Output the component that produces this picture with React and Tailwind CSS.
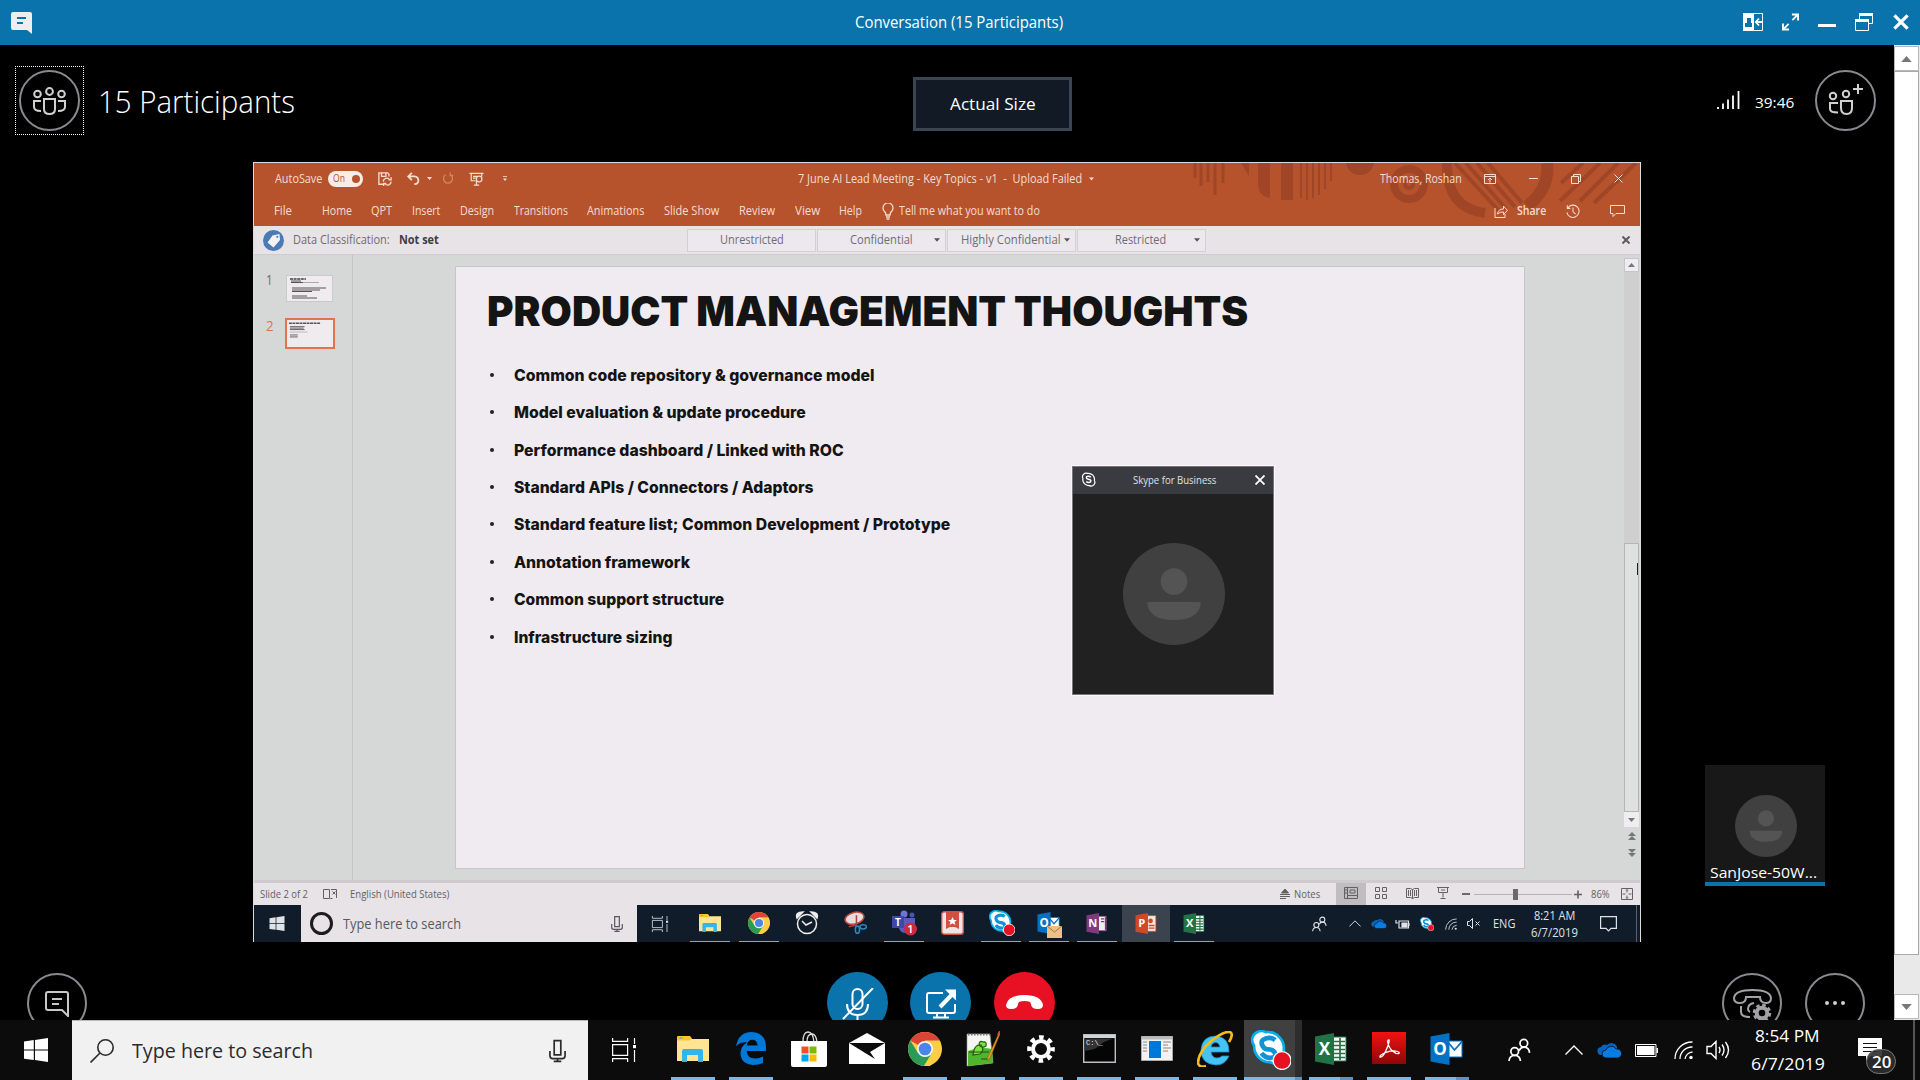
import { useLayoutEffect, useRef, useState } from "react";

/* Single-line label whose glyphs are condensed or widened to fill its slot. */
function Fit({ className = "", children }) {
  const outer = useRef(null);
  const inner = useRef(null);
  const [scale, setScale] = useState(1);
  useLayoutEffect(() => {
    const w = inner.current.offsetWidth;
    if (w) setScale(outer.current.clientWidth / w);
  }, []);
  return (
    <span ref={outer} className={"block shrink-0 whitespace-nowrap " + className}>
      <span ref={inner} className="inline-block origin-left" style={{ transform: `scaleX(${scale})` }}>
        {children}
      </span>
    </span>
  );
}

function Icon({ className = "", box = "0 0 16 16", sw = 1, children }) {
  return (
    <svg className={"block shrink-0 " + className} viewBox={box} fill="none" stroke="currentColor" strokeWidth={sw}>
      {children}
    </svg>
  );
}

const Caret = ({ className = "w-[7px] h-[4px]" }) => (
  <Icon className={className} box="0 0 7 4">
    <path d="M0 0h7L3.500 4z" fill="currentColor" stroke="none" />
  </Icon>
);

/* ---------- Title bar ---------- */
function TitleBar() {
  return (
    <div className="flex h-[45px] shrink-0 items-start bg-[#0a73ab] text-white">
      <Icon className="ml-[11px] mt-[12px] h-[22px] w-[21px]" box="0 0 21 22">
        <path d="M2 0h17a2 2 0 0 1 2 2v20l-5-4H2a2 2 0 0 1-2-2V2a2 2 0 0 1 2-2z" fill="#eee" stroke="none" />
        <path d="M6 6h9M6 11h6" stroke="#0a73ab" strokeWidth="2" />
      </Icon>
      <Fit className="ml-[823px] mt-[10px] w-[208px] text-[16px] leading-6">Conversation (15 Participants)</Fit>
      <Icon className="ml-[680px] mt-[13px] h-[18px] w-[20px]" box="0 0 20 18">
        <path d="M0.5 0.5h19v17h-19z" />
        <path d="M0 0h11v18H0z" fill="currentColor" stroke="none" />
        <path d="M4 5h4v5H4zM2 10h7v4H2z" fill="#0a73ab" stroke="none" />
        <path d="M19 9h-5.500M16 5.500L12.800 9l3.200 3.500" strokeWidth="1.800" />
      </Icon>
      <Icon className="ml-[19px] mt-[13px] h-[18px] w-[17px]" box="0 0 18 18" sw={2}>
        <path d="M10.500 1H17v6.500M17 1l-6 6M7.500 17H1v-6.500M1 17l6-6" />
      </Icon>
      <div className="ml-[19px] mt-[24px] h-[3px] w-[18px] bg-white" />
      <Icon className="ml-[19px] mt-[13px] h-[18px] w-[18px]" box="0 0 18 18">
        <path d="M4.500 6V.5h13v10H14" />
        <path d="M4 1.500h14" strokeWidth="3" />
        <path d="M.5 6.500h13v11H.5z" />
        <path d="M0 7.500h14" strokeWidth="3" />
      </Icon>
      <Icon className="ml-[20px] mt-[14px] h-[16px] w-[16px]" box="0 0 17 16" sw={3.400}>
        <path d="M1.500 1l14 14M15.500 1l-14 14" />
      </Icon>
    </div>
  );
}

/* ---------- Call header ---------- */
function CallHeader() {
  return (
    <div className="flex h-[117px] shrink-0 items-start text-white">
      <div className="ml-[15px] mt-[21px] flex h-[69px] w-[69px] items-center justify-center border border-dotted border-white">
        <div className="flex h-[61px] w-[61px] items-center justify-center rounded-full border-2 border-[#8b8990] text-[#d0d0d0]">
          <Icon className="mt-[1px] h-[28px] w-[33px]" box="0 0 33 28" sw={2}>
            <circle cx="16.500" cy="4.500" r="3.400" />
            <circle cx="4.500" cy="7" r="3.300" />
            <circle cx="28.500" cy="7" r="3.300" />
            <path d="M11 12h11v10q0 5-5.500 5T11 22z" />
            <path d="M8 14H1v6q0 4 7 4M25 14h7v6q0 4-7 4" />
          </Icon>
        </div>
      </div>
      <Fit className="ml-[14px] mt-[34px] w-[197px] text-[32px] font-light leading-[44px]">15 Participants</Fit>
      <div className="ml-[618px] mt-[32px] flex h-[54px] w-[159px] items-center justify-center border-[3px] border-[#3a4651] bg-[#121b25]">
        <Fit className="mb-[1px] w-[86px] text-[17px] leading-6">Actual Size</Fit>
      </div>
      <Icon className="ml-[645px] mt-[46px] h-[18px] w-[23px]" box="0 0 23 18" sw={1.800}>
        <path d="M1 16v2M6 12.500V18M11 8.500V18M16 4.500V18M21.500 0v18" />
      </Icon>
      <Fit className="ml-[15px] mt-[46px] w-[39px] text-[15px] leading-[22px]">39:46</Fit>
      <div className="ml-[21px] mt-[25px] flex h-[61px] w-[61px] items-center justify-center rounded-full border-2 border-[#8b8990] text-[#d0d0d0]">
        <Icon className="mb-[3px] ml-[1px] h-[31px] w-[36px]" box="0 0 36 31" sw={2}>
          <circle cx="5" cy="12" r="3.200" />
          <circle cx="18" cy="10" r="3.200" />
          <path d="M13 17h11v7q0 6-5.500 6T13 24z" />
          <path d="M10 19H2v6q0 3.500 8 3.500" />
          <path d="M30 0v10M25 5h10" />
        </Icon>
      </div>
    </div>
  );
}

/* ---------- Shared presentation window ---------- */
const TABS = [
  ["File", "ml-[20px] w-[18px]"],
  ["Home", "ml-[30px] w-[30px]"],
  ["QPT", "ml-[19px] w-[21px]"],
  ["Insert", "ml-[20px] w-[28px]"],
  ["Design", "ml-[20px] w-[34px]"],
  ["Transitions", "ml-[20px] w-[54px]"],
  ["Animations", "ml-[19px] w-[57px]"],
  ["Slide Show", "ml-[20px] w-[55px]"],
  ["Review", "ml-[20px] w-[36px]"],
  ["View", "ml-[20px] w-[25px]"],
  ["Help", "ml-[19px] w-[23px]"],
];

function Ribbon() {
  return (
    <div className="relative h-[63px] shrink-0 overflow-hidden bg-[#b6532d] text-[12px] font-medium text-[#f8dcd0]">
      <svg className="absolute right-0 top-0 h-[63px] w-[460px]" viewBox="1180 163 460 63" fill="none" stroke="#a04626">
        <path d="M1195 163v15M1201 163v23M1208 163v19M1215 163v32M1223 163v20" strokeWidth="3" />
        <path d="M1241 163h8v13z" fill="#a04626" stroke="none" />
        <path d="M1258 163h12v35q-12-2-12-14zM1281 163h12v37h-12z" fill="#a04626" stroke="none" />
        <path d="M1301 163v35M1307 163v37M1313 163v35M1319 163v32M1325 163v26M1331 163v18" strokeWidth="2" />
        <path d="M1346 163h28q-3 12-14 12t-14-12z" fill="#a04626" stroke="none" />
        <circle cx="1409" cy="184" r="15" strokeWidth="8" />
        <circle cx="1409" cy="184" r="4" strokeWidth="4" />
        <path d="M1447 163q-1 45 38 50" strokeWidth="10" />
        <path d="M1455 163l44 48M1466 163l40 46M1477 163l38 44M1488 163l34 40" strokeWidth="4" />
        <path d="M1547 163q3 26-20 43" strokeWidth="12" />
        <path d="M1583 163l-22 20M1600 163l-40 38M1618 163l-38 38M1636 163l-42 40" strokeWidth="4" />
      </svg>
      <div className="relative flex h-[31px] items-center">
        <Fit className="ml-[21px] w-[47px]">AutoSave</Fit>
        <div className="ml-[6px] flex h-[16px] w-[35px] items-center justify-between rounded-full bg-[#f8ebe8] pl-[5px] pr-[3px] text-[10px] text-[#b6532d]">
          <Fit className="w-[12px]">On</Fit>
          <span className="h-[8px] w-[8px] rounded-full bg-[#b6532d]" />
        </div>
        <Icon className="ml-[15px] h-[14px] w-[14px]" sw={1.500}>
          <path d="M6 14H1V1h10l1.500 1.500V5M4 1v4h5V1M6 11a4 4 0 0 1 7-2.500M15 6v3h-3M15 11a4 4 0 0 1-7 2.500M6.500 16v-3h3" />
        </Icon>
        <Icon className="ml-[15px] h-[13px] w-[13px]" sw={2.200}>
          <path d="M6 1L1.500 5.500 6 10M2 5.500h7q5 .5 5 5T9 15" />
        </Icon>
        <Caret className="ml-[7px] h-[3px] w-[5px]" />
        <Icon className="ml-[10px] h-[13px] w-[12px] text-[#cf8466]" sw={1.800}>
          <path d="M5 3a6 6 0 1 0 6 0M11 0v4h4" />
        </Icon>
        <Icon className="ml-[15px] h-[14px] w-[15px]" sw={1.400}>
          <path d="M0 1.500h16M2 2v8h5M14 2v3M4 5h5M4 7h3M8 10v5M5 15h6" />
          <circle cx="11" cy="8" r="3.200" />
        </Icon>
        <Icon className="ml-[19px] h-[5px] w-[4px]" box="0 0 5 6">
          <path d="M0 .5h5" />
          <path d="M0 3h5L2.500 6z" fill="currentColor" stroke="none" />
        </Icon>
        <Fit className="ml-[291px] w-[284px]">7 June AI Lead Meeting - Key Topics - v1&nbsp; -&nbsp; Upload Failed</Fit>
        <Caret className="ml-[7px] h-[4px] w-[5px]" />
        <Fit className="ml-[286px] w-[82px]">Thomas, Roshan</Fit>
        <Icon className="ml-[22px] h-[10px] w-[12px]" box="0 0 12 10">
          <path d="M.5.5h11v9H.5zM.5 2.500h11M6 8.500V4M4 6l2-2 2 2" />
        </Icon>
        <div className="ml-[33px] h-[1px] w-[9px] bg-[#f8dcd0]" />
        <Icon className="ml-[33px] h-[10px] w-[10px]" box="0 0 10 10">
          <path d="M.5 2.500h7v7h-7zM2.500 2V.5h7v7H8" />
        </Icon>
        <Icon className="ml-[33px] h-[9px] w-[9px]" box="0 0 9 9">
          <path d="M.5.5l8 8M8.500.5l-8 8" />
        </Icon>
      </div>
      <div className="relative flex h-[34px] items-center">
        {TABS.map(([label, cls]) => (
          <Fit key={label} className={cls}>{label}</Fit>
        ))}
        <Icon className="ml-[20px] h-[17px] w-[12px]" box="0 0 12 17" sw={1.300}>
          <path d="M4 12q0-2-1.500-3.500a5 5 0 1 1 7 0Q8 10 8 12zM4 14h4M4.500 16h3" />
        </Icon>
        <Fit className="ml-[5px] w-[141px]">Tell me what you want to do</Fit>
        <Icon className="ml-[454px] h-[13px] w-[14px]" box="0 0 14 13">
          <path d="M1 3v9.500h10V9M3.500 9q.5-5 6-5V1l4 4.500-4 4V7Q6 6.500 3.500 9z" />
        </Icon>
        <Fit className="ml-[9px] w-[29px] font-semibold">Share</Fit>
        <Icon className="ml-[20px] h-[14px] w-[14px]" sw={1.200}>
          <path d="M2 4.500a7 7 0 1 1-1 5M1.500 1.500v3.500H5M8 4v5l3 2.500" />
        </Icon>
        <Icon className="ml-[30px] h-[12px] w-[15px]" box="0 0 15 12">
          <path d="M.5.5h14v8H6l-3 3v-3H.5z" />
        </Icon>
      </div>
    </div>
  );
}

const CLASSES = [
  ["Unrestricted", "w-[64px] ml-[32px]", null],
  ["Confidential", "w-[63px] ml-[32px]", "ml-[21px]"],
  ["Highly Confidential", "w-[100px] ml-[13px]", "ml-[3px]"],
  ["Restricted", "w-[51px] ml-[37px]", "ml-[28px]"],
];

function DataBar() {
  return (
    <div className="flex h-[29px] shrink-0 items-center border-b border-[#cfccd0] bg-[#e7e3e7] text-[12px] font-medium text-[#6f6c72]">
      <Icon className="ml-[9px] h-[21px] w-[21px]" box="0 0 21 21">
        <circle cx="10.500" cy="10.500" r="10.500" fill="#4b7ab4" stroke="none" />
        <path d="M9.500 5.500l7-1.500.5 6-6.500 7.500-6-5z" fill="#f4f2f7" stroke="none" />
        <circle cx="14.300" cy="6.800" r="1.100" fill="#4b7ab4" stroke="none" />
      </Icon>
      <Fit className="ml-[9px] w-[97px]">Data Classification:</Fit>
      <Fit className="ml-[9px] w-[40px] font-bold text-[#3f3d40]">Not set</Fit>
      <div className="ml-[248px] flex gap-[1px]">
        {CLASSES.map(([label, cls, caret]) => (
          <div key={label} className="flex h-[23px] w-[129px] items-center border border-[#d3cfd4] bg-[#ece8ed]">
            <Fit className={cls}>{label}</Fit>
            {caret && <Caret className={"h-[4px] w-[6px] text-[#555] " + caret} />}
          </div>
        ))}
      </div>
      <Icon className="ml-[416px] h-[8px] w-[8px] text-[#5c5c5c]" box="0 0 8 8" sw={2}>
        <path d="M.5.5l7 7M7.500.5l-7 7" />
      </Icon>
    </div>
  );
}

const BULLETS = [
  ["Common code repository & governance model", "w-[360px]"],
  ["Model evaluation & update procedure", "w-[292px]"],
  ["Performance dashboard / Linked with ROC", "w-[330px]"],
  ["Standard APIs / Connectors / Adaptors", "w-[300px]"],
  ["Standard feature list; Common Development / Prototype", "w-[436px]"],
  ["Annotation framework", "w-[176px]"],
  ["Common support structure", "w-[210px]"],
  ["Infrastructure sizing", "w-[158px]"],
];

function Avatar({ className }) {
  return (
    <svg className={"block shrink-0 " + className} viewBox="0 0 102 102">
      <circle cx="51" cy="51" r="51" fill="#404040" />
      <circle cx="51" cy="38.500" r="13.300" fill="#545454" />
      <path d="M24.500 59h53v3q-3 15-26.500 15T24.500 62z" fill="#545454" />
    </svg>
  );
}

function SkypePopup() {
  return (
    <div className="absolute left-[818px] top-[211px] h-[229px] w-[202px] border border-[#77777a] bg-[#212121] outline outline-[#fbf8fb]">
      <div className="flex h-[27px] items-center bg-[#3a3b41] pb-[2px] text-white">
        <Icon className="ml-[8px] h-[15px] w-[15px]" sw={1.300}>
          <path d="M2 7A4 4 0 0 1 7 1.500 6.500 6.500 0 0 1 14.300 9 4 4 0 0 1 9 14.500 6.500 6.500 0 0 1 2 7z" />
          <path d="M10.500 5.500Q8 3.800 6 5q-1 2 2 2.800 3.500.7 2.200 2.700-2 1.500-4.700-.3" strokeWidth="1.500" />
        </Icon>
        <Fit className="ml-[37px] w-[83px] text-[11.500px] text-[#e0e0e2]">Skype for Business</Fit>
        <Icon className="ml-[39px] h-[10px] w-[10px]" box="0 0 10 10" sw={1.800}>
          <path d="M.5.5l9 9M9.500.5l-9 9" />
        </Icon>
      </div>
      <Avatar className="ml-[50px] mt-[49px] h-[102px] w-[102px]" />
    </div>
  );
}

function Workspace() {
  return (
    <div className="relative flex h-[625px] shrink-0 bg-[#d6d8d7]">
      <div className="w-[99px] shrink-0 border-r border-[#c4c6c5] pl-[12px] pt-[19px] text-[15px] font-medium text-[#6c6c6c]">
        <div className="flex">
          <Fit className="mt-[-3px] w-[7px] leading-[16px]">1</Fit>
          <div className="ml-[13px] mt-[1px] h-[27px] w-[47px] border border-[#cacaca] bg-[#efebef]">
            <svg className="h-[25px] w-[45px]" viewBox="0 0 45 25" stroke="#444" fill="none">
              <path d="M3 3h16" strokeWidth="1.500" strokeDasharray="3 .6" />
              <path d="M4 5h10M4 6.500h12M5 12h34M5 14h28M5 15.500h20M5 20h15M5 22h25" strokeWidth=".9" />
              <path d="M16 6.500h16" stroke="#aaa" />
            </svg>
          </div>
        </div>
        <div className="mt-[16px] flex">
          <Fit className="mt-[-1px] w-[8px] leading-[16px] text-[#e0705c]">2</Fit>
          <div className="ml-[11px] h-[31px] w-[50px] border-2 border-[#e4714f] bg-[#efebef]">
            <svg className="h-[27px] w-[46px]" viewBox="0 0 47 27" stroke="#555" fill="none">
              <path d="M2 3h32" strokeWidth="1.500" strokeDasharray="3 .6" />
              <path d="M3 6.500h15M3 8h14M3 9.500h15M3 15h8M3 17h8" strokeWidth=".9" />
              <path d="M3 12h18" stroke="#bbb" />
            </svg>
          </div>
        </div>
      </div>
      <div className="ml-[102px] mt-[11px] h-[603px] w-[1070px] shrink-0 border border-[#c6c6c8] bg-[#f0ebf0] pl-[30px] text-[#141414]">
        <Fit className="mt-[18px] ml-[1px] w-[761px] font-[Inter] text-[41.500px] font-black leading-[52px]">PRODUCT MANAGEMENT THOUGHTS</Fit>
        <ul className="mt-[19px] font-[Inter] text-[16px] font-extrabold">
          {BULLETS.map(([text, w]) => (
            <li key={text} className="flex h-[37.450px] items-center">
              <span className="ml-[4px] mr-[20px] h-[4px] w-[4px] rounded-full bg-[#222]" />
              <Fit className={w}>{text}</Fit>
            </li>
          ))}
        </ul>
      </div>
      <div className="ml-[99px] w-[16px] shrink-0 text-[#777]">
        <div className="mt-[3px] flex h-[14px] w-[15px] items-center justify-center border border-[#c6c6c6] bg-[#efedef]">
          <Caret className="h-[4px] w-[7px] rotate-180" />
        </div>
        <div className="h-[271px] w-[15px] bg-[#cfcfcf]" />
        <div className="h-[269px] w-[15px] border border-[#b5b5b5] bg-[#dfe1e0]">
          <div className="ml-auto mt-[19px] h-[12px] w-[1px] bg-[#222]" />
        </div>
        <div className="flex h-[15px] w-[15px] items-center justify-center bg-[#efedef]">
          <Caret className="h-[4px] w-[7px]" />
        </div>
        <Icon className="ml-[4px] mt-[5px] h-[9px] w-[8px]" box="0 0 8 9">
          <path d="M4 0l4 4H0zM4 4l4 4H0z" fill="currentColor" stroke="none" />
        </Icon>
        <Icon className="ml-[4px] mt-[8px] h-[9px] w-[8px]" box="0 0 8 9">
          <path d="M0 0h8L4 4zM0 4h8L4 8z" fill="currentColor" stroke="none" />
        </Icon>
      </div>
      <SkypePopup />
    </div>
  );
}

function StatusBar() {
  return (
    <div className="flex h-[25px] shrink-0 items-center border-t-[3px] border-[#cdcbce] bg-[#e7e3e7] text-[11px] font-medium text-[#626264]">
      <Fit className="ml-[6px] w-[48px]">Slide 2 of 2</Fit>
      <Icon className="mb-[2px] ml-[15px] h-[11px] w-[14px]" box="0 0 14 11">
        <path d="M6.500 1.500v9H.5v-9zM6.500 9.500l1 1h2M8 1.500h5.500V10M9.500 3.500l3 3M12.500 3.500l-3 3" />
      </Icon>
      <Fit className="ml-[13px] w-[99px]">English (United States)</Fit>
      <Icon className="ml-[831px] h-[10px] w-[10px]" box="0 0 10 10">
        <path d="M5 0l3.500 4h-7zM0 5.500h10M0 7.500h10M0 9.500h6" fill="currentColor" />
      </Icon>
      <Fit className="ml-[4px] w-[26px]">Notes</Fit>
      <div className="ml-[16px] flex h-full w-[30px] items-center justify-center bg-[#bfbdbf]">
        <Icon className="mb-[2px] h-[12px] w-[14px]" box="0 0 14 12">
          <path d="M.5.5h13v11H.5zM3.500.5v11M6 3h5v3H6zM3.500 8.500h10M1 3h2M1 6h2" />
        </Icon>
      </div>
      <Icon className="mb-[2px] ml-[9px] h-[12px] w-[12px]" box="0 0 12 12">
        <path d="M.5.5h4v4h-4zM7.500.5h4v4h-4zM.5 7.500h4v4h-4zM7.500 7.500h4v4h-4z" />
      </Icon>
      <Icon className="mb-[2px] ml-[19px] h-[11px] w-[13px]" box="0 0 13 11">
        <path d="M6.500 1.500v9M.5.5h4l2 1 2-1h4v9h-4l-2 1-2-1h-4zM2.500 2v6M4.500 2v6M8.500 2v6M10.500 2v6" />
      </Icon>
      <Icon className="mb-[2px] ml-[18px] h-[12px] w-[12px]" box="0 0 12 12">
        <path d="M0 .5h12M1.500.5v5h9v-5M6 5.500v5M3.500 11.500h5M4 3h4" />
      </Icon>
      <div className="ml-[13px] h-[2px] w-[8px] bg-[#6a6a6c]" />
      <div className="ml-[4px] h-[1px] w-[39px] bg-[#b5b3b5]" />
      <div className="h-[11px] w-[5px] bg-[#6a6a6c]" />
      <div className="h-[1px] w-[54px] bg-[#b5b3b5]" />
      <Icon className="ml-[2px] h-[9px] w-[8px]" box="0 0 8 8" sw={1.600}>
        <path d="M4 0v8M0 4h8" />
      </Icon>
      <Fit className="ml-[9px] w-[19px]">86%</Fit>
      <Icon className="mb-[1px] ml-[11px] h-[12px] w-[12px]" box="0 0 12 12">
        <path d="M.5.5h11v11H.5zM6 1.500v3M6 7.500v3M1.500 6h3M7.500 6h3M5 2.500l1-1 1 1M5 9.500l1 1 1-1" />
      </Icon>
    </div>
  );
}

/* ---------- Application icons shared by both taskbars ---------- */
const Windows = ({ className }) => (
  <svg className={"block shrink-0 " + className} viewBox="0 0 24 24" fill="currentColor">
    <path d="M0 3.400L9.800 2v9.500H0zM11 1.900L24 0v11.500H11zM0 12.600h9.800V22L0 20.700zM11 12.600h13V24l-13-1.900z" />
  </svg>
);
const Mic = ({ className }) => (
  <Icon className={className} box="0 0 18 24" sw={1.800}>
    <path d="M5.500 1h7v15h-7zM1 12v5q0 3 3 3h10q3 0 3-3v-5M9 20v3M5 23h8" />
  </Icon>
);
const TaskView = ({ className }) => (
  <Icon className={className} box="0 0 24 24" sw={1.200}>
    <path d="M.6 0v3.400h15V0M.6 6.600h15v10.800H.6zM.6 24v-3.400h15V24M22.500 0v6M22.500 12v12" />
    <path d="M21 7h3.200v3.200H21z" fill="currentColor" stroke="none" />
  </Icon>
);
const Explorer = ({ className }) => (
  <svg className={"block " + className} viewBox="0 0 32 26">
    <path d="M0 1h13l1.500 2H32v22H0z" fill="#ffe592" />
    <path d="M0 1q0-1 1-1h12l2 2.500-2 2H0z" fill="#fbc52d" />
    <path d="M2.500 2h3" stroke="#4aa8e8" strokeWidth="1.200" />
    <path d="M5 26V15q0-2 2-2h17q2 0 2 2v11h-5v-7H10v7z" fill="#35b4ea" />
  </svg>
);
const Chrome = ({ className }) => (
  <svg className={"block " + className} viewBox="0 0 34 34">
    <circle cx="17" cy="17" r="17" fill="#fccd45" />
    <path d="M17 17L2.300 8.500A17 17 0 0 1 31.700 8.500H17z" fill="#dc4437" />
    <path d="M2.300 8.500A17 17 0 0 0 16 34l8-13-7-4-7 4z" fill="#2b9a55" />
    <path d="M17 9h15q4 13-5 21t-11 4l8-13z" fill="#fccd45" />
    <circle cx="17" cy="17" r="8" fill="#f5f5f5" />
    <circle cx="17" cy="17" r="6.300" fill="#4a86e8" />
  </svg>
);
const SkypeApp = ({ className }) => (
  <svg className={"block " + className} viewBox="0 0 38 38">
    <path d="M1 9A9 9 0 0 1 14 2 15.500 15.500 0 0 1 31 20 9 9 0 0 1 18 30.500 15 15 0 0 1 3 15 9 9 0 0 1 1 9z" fill="#fff" stroke="#00aff0" strokeWidth="2.500" />
    <path d="M23 9.500Q19 6.500 14 8t-3.500 6 6.500 4.500 6 4-4.500 4T10 22" fill="none" stroke="#1093d6" strokeWidth="4.500" />
    <circle cx="29.500" cy="29" r="8.500" fill="#e81123" stroke="#fff" strokeWidth="1.200" />
  </svg>
);
const OfficeDoor = ({ className, letter, color, children }) => (
  <svg className={"block " + className} viewBox="0 0 32 32">
    {children}
    <path d="M0 3.500L19 0v32L0 28.500z" fill={color} />
    <text x="9.500" y="22" textAnchor="middle" fontFamily="Open Sans, sans-serif" fontWeight="700" fontSize="17" fill="#fff">{letter}</text>
  </svg>
);
const Excel = ({ className }) => (
  <OfficeDoor className={className} letter="X" color="#217346">
    <path d="M17 4h14v24H17z" fill="#fff" stroke="#217346" />
    <path d="M17 8.500h13M17 12.500h13M17 16.500h13M17 20.500h13M17 24.500h13M25 5v22" stroke="#217346" strokeWidth="1.700" />
  </OfficeDoor>
);
const Outlook = ({ className }) => (
  <OfficeDoor className={className} letter="O" color="#0072c6">
    <path d="M18 8h13.500v16H18z" fill="#fff" stroke="#0072c6" />
    <path d="M18 10l6 7 7.500-8.500" fill="none" stroke="#0072c6" strokeWidth="1.800" />
  </OfficeDoor>
);
const People = ({ className }) => (
  <Icon className={className} box="0 0 24 24" sw={1.800}>
    <circle cx="16.500" cy="5" r="4" />
    <circle cx="7" cy="13.500" r="4" />
    <path d="M1 23.500q.5-6 6-6t6 6M11.500 12.500q2-3.500 5-3.500 5.500 0 6 6" />
  </Icon>
);
const Chevron = ({ className }) => (
  <Icon className={className} box="0 0 18 10" sw={1.400}>
    <path d="M.5 9.500L9 1l8.500 8.500" />
  </Icon>
);
const Cloud = ({ className }) => (
  <svg className={"block shrink-0 " + className} viewBox="0 0 25 16">
    <path d="M5 13a4 4 0 0 1-1-8 5 5 0 0 1 6-2 6 6 0 0 1 10 2v8z" fill="#0a63bd" />
    <path d="M9 16a4 4 0 0 1 0-8 5.500 5.500 0 0 1 10-1 4.500 4.500 0 0 1 2 9z" fill="#0a7be0" stroke="#0c0c0c" strokeWidth=".8" />
  </svg>
);
const Wifi = ({ className }) => (
  <Icon className={className} box="0 0 19 18" sw={1.300}>
    <path d="M1 18A17 17 0 0 1 18.500 1M6 18A12 12 0 0 1 18.500 6M11 18a8 8 0 0 1 7.500-7" />
    <circle cx="17" cy="16.500" r="1.700" fill="currentColor" stroke="none" />
  </Icon>
);

/* ---------- Inner taskbar ---------- */
const INNER_APPS = [
  [<Explorer className="h-[18px] w-[22px]" />, "bg-[#6cb0e2]"],
  [<Chrome className="h-[22px] w-[22px]" />, "bg-[#6cb0e2]"],
  [
    <Icon className="h-[24px] w-[24px] text-[#eee]" box="0 0 24 24" sw={1.500}>
      <circle cx="12" cy="13" r="9.500" />
      <path d="M7 10l4 4 6-3" />
      <path d="M2 7Q0 1 8 1zM22 7q2-6-6-6z" fill="currentColor" />
    </Icon>,
    "",
  ],
  [
    <Icon className="h-[24px] w-[23px]" box="0 0 24 24" sw={1.600}>
      <ellipse cx="11" cy="7" rx="10" ry="6" fill="#e8dddd" stroke="#c04a40" transform="rotate(-15 11 7)" />
      <path d="M13 4v10M13 14l-8 2" stroke="#b04040" />
      <ellipse cx="14" cy="19" rx="2.200" ry="3.800" stroke="#2a8ac0" />
      <ellipse cx="20" cy="16" rx="3.400" ry="2.200" stroke="#2a8ac0" />
    </Icon>,
    "",
  ],
  [
    <svg className="h-[26px] w-[26px]" viewBox="0 0 26 26">
      <circle cx="13" cy="4" r="3.500" fill="#6d76d8" />
      <circle cx="21" cy="5" r="2.500" fill="#4a54b4" />
      <path d="M8 8h16v9q-3 6-9 6t-7-5z" fill="#555ec0" />
      <path d="M1 6h12v12H1z" fill="#3f48a8" />
      <text x="7" y="16" textAnchor="middle" fontFamily="Open Sans, sans-serif" fontWeight="700" fontSize="10" fill="#fff">T</text>
      <circle cx="19.500" cy="19" r="6.500" fill="#d0283c" />
      <text x="19.500" y="23" textAnchor="middle" fontFamily="Open Sans, sans-serif" fontWeight="600" fontSize="11" fill="#fff">1</text>
    </svg>,
    "bg-[#6cb0e2]",
  ],
  [
    <svg className="h-[24px] w-[23px]" viewBox="0 0 23 24">
      <rect x=".7" y=".7" width="21.600" height="22.600" rx="2.500" fill="#f1e5e1" stroke="#d3503f" strokeWidth="1.400" />
      <path d="M5 1h13v17l-4-2H9l-4 2z" fill="#d3503f" />
      <path d="M11.500 6l1.300 3h3.200l-2.500 2 1 3-3-1.800-3 1.800 1-3-2.500-2h3.200z" fill="#fff" />
    </svg>,
    "",
  ],
  [<SkypeApp className="ml-[2px] h-[26px] w-[26px]" />, "bg-[#6cb0e2]"],
  [
    <div className="relative">
      <Outlook className="h-[22px] w-[23px]" />
      <svg className="absolute -bottom-[4px] -right-[2px] h-[12px] w-[15px]" viewBox="0 0 15 12">
        <path d="M0 0h15v12H0z" fill="#edc184" />
        <path d="M0 0l7.500 6L15 0" fill="none" stroke="#a9773b" />
      </svg>
    </div>,
    "bg-[#6cb0e2]",
  ],
  [
    <OfficeDoor className="h-[21px] w-[22px]" letter="N" color="#80397b">
      <path d="M17 5h13v22H17z" fill="#eee" stroke="#80397b" />
      <path d="M22 9h5M22 13h5M29 6v20" stroke="#80397b" strokeWidth="2" />
    </OfficeDoor>,
    "bg-[#6cb0e2]",
  ],
  [
    <OfficeDoor className="h-[21px] w-[22px]" letter="P" color="#d24726">
      <path d="M17 4h14v24H17z" fill="#f6e8e4" stroke="#d24726" />
      <circle cx="23" cy="12" r="3.500" fill="#d24726" />
      <path d="M20 19h9M20 23h9" stroke="#d24726" strokeWidth="2" />
    </OfficeDoor>,
    "",
  ],
  [<Excel className="h-[21px] w-[22px]" />, "bg-[#6cb0e2]"],
];

function InnerTaskbar() {
  return (
    <div className="flex h-[37px] shrink-0 items-center bg-[#101c29] text-[#dfe3e8]">
      <div className="flex w-[47px] shrink-0 justify-center">
        <Windows className="mr-[2px] h-[15px] w-[16px]" />
      </div>
      <div className="flex h-full w-[336px] shrink-0 items-center bg-[#e7e3e7] text-[#5a585c]">
        <div className="ml-[9px] h-[23px] w-[23px] rounded-full border-[3px] border-[#1d1d1f]" />
        <Fit className="mb-[1px] ml-[10px] w-[118px] text-[15px] font-medium">Type here to search</Fit>
        <Mic className="ml-[150px] h-[16px] w-[12px]" />
      </div>
      <TaskView className="ml-[13px] h-[16px] w-[20px]" />
      <div className="ml-[16px] flex h-full shrink-0">
        {INNER_APPS.map(([icon, line], i) => (
          <div
            key={i}
            className={
              "flex h-full w-[48.400px] flex-col items-center " + (i === 9 ? "bg-[#3b444e]" : "")
            }
          >
            <div className="flex h-[36px] items-center">{icon}</div>
            <div className={"h-[1px] w-[40px] " + line} />
          </div>
        ))}
      </div>
      <People className="ml-[94px] h-[16px] w-[15px]" />
      <Chevron className="ml-[22px] h-[7px] w-[12px]" />
      <Cloud className="ml-[10px] h-[11px] w-[16px]" />
      <Icon className="ml-[8px] h-[10px] w-[15px]" box="0 0 15 10" sw={1.200}>
        <path d="M4 2h9.500v7H4zM14 4v3M1 1v3h2" />
        <path d="M7 4h5v4H7z" fill="currentColor" />
      </Icon>
      <SkypeApp className="ml-[10px] h-[14px] w-[14px] shrink-0" />
      <Wifi className="ml-[11px] h-[12px] w-[12px]" />
      <Icon className="ml-[10px] h-[11px] w-[13px]" box="0 0 13 11">
        <path d="M.5 3.500h2l3-3v10l-3-3h-2zM8.500 3.500l4 4M12.500 3.500l-4 4" />
      </Icon>
      <Fit className="ml-[13px] w-[22px] text-[12px]">ENG</Fit>
      <div className="ml-[16px] flex w-[47px] shrink-0 flex-col items-center text-[12px] leading-[17px]">
        <Fit className="w-[41px]">8:21 AM</Fit>
        <Fit className="w-[47px]">6/7/2019</Fit>
      </div>
      <Icon className="ml-[22px] h-[16px] w-[17px]" box="0 0 17 16" sw={1.200}>
        <path d="M.6.6h15.800v11.800H11L8.500 15 6 12.400H.6z" />
      </Icon>
      <div className="ml-[19px] h-full w-[1px] bg-[#59626c]" />
    </div>
  );
}

/* ---------- Stage ---------- */
function Stage() {
  return (
    <div className="flex h-[780px] shrink-0 items-start">
      <div className="ml-[253px] flex h-[780px] w-[1388px] shrink-0 flex-col overflow-hidden border border-b-0 border-[#dcdcdc]">
        <Ribbon />
        <DataBar />
        <Workspace />
        <StatusBar />
        <InnerTaskbar />
      </div>
      <div className="ml-[64px] mt-[603px] flex h-[121px] w-[120px] flex-col border-b-4 border-[#0a73ab] bg-[#181818]">
        <Avatar className="ml-[30px] mt-[30px] h-[62px] w-[62px]" />
        <Fit className="ml-[5px] mt-[5px] w-[107px] text-[15px] leading-[20px] text-white">SanJose-50W...</Fit>
      </div>
    </div>
  );
}

/* ---------- Call controls, partly hidden by the taskbar ---------- */
function Controls() {
  return (
    <div className="flex h-[78px] shrink-0 items-start overflow-hidden text-white">
      <div className="ml-[27px] mt-[31px] flex h-[60px] w-[60px] shrink-0 items-center justify-center rounded-full border-2 border-[#8b8990] text-[#c8c8ca]">
        <Icon className="mt-[1px] h-[26px] w-[24px]" box="0 0 24 26" sw={2}>
          <path d="M3 1h18q2 0 2 2v22l-6-6H3q-2 0-2-2V3q0-2 2-2zM7 8h10M7 13h7" />
        </Icon>
      </div>
      <div className="ml-[740px] mt-[30px] flex h-[61px] w-[61px] shrink-0 items-center justify-center rounded-full bg-[#0a73ab]">
        <Icon className="mt-[2px] h-[32px] w-[32px]" box="0 0 32 32" sw={2}>
          <rect x="10.500" y="1" width="10" height="20" rx="5" />
          <path d="M5 16q0 11 10.500 11T26 16M15.500 27v5M31 0L1 31" />
        </Icon>
      </div>
      <div className="ml-[22px] mt-[30px] flex h-[61px] w-[61px] shrink-0 items-center justify-center rounded-full bg-[#0a73ab]">
        <Icon className="mt-[3px] h-[30px] w-[30px]" box="0 0 30 30" sw={2}>
          <path d="M17 4H3q-2 0-2 2v16q0 2 2 2h24q2 0 2-2v-7M11 24v4M19 24v4M7 28.500h16" />
          <path d="M14 18L27 4.500" strokeWidth="4" />
          <path d="M19 0.500h11v11l-4-4-3-3z" fill="currentColor" stroke="none" />
        </Icon>
      </div>
      <div className="ml-[23px] mt-[30px] flex h-[61px] w-[61px] shrink-0 items-center justify-center rounded-full bg-[#e81123]">
        <Icon className="h-[15px] w-[37px]" box="0 0 37 15">
          <path d="M0 10Q2 0 18.500 0T37 10q0 4-5 4-7 0-7-5 0-3-6.500-3T12 9q0 5-7 5-5 0-5-4z" fill="currentColor" stroke="none" />
        </Icon>
      </div>
      <div className="ml-[667px] mt-[31px] flex h-[60px] w-[60px] shrink-0 items-center justify-center rounded-full border-2 border-[#8b8990] text-[#a2a2a6]">
        <Icon className="mt-[4px] h-[33px] w-[39px]" box="0 0 39 33" sw={2}>
          <path d="M1 9Q2 1 19.500 1T38 9q0 5-5 5-6 0-6-6H13q0 6-6 6-6 0-6-5z" />
          <path d="M8 17v6q0 5 9 5M21 14q-6 1-6 6 0 2 2 3" />
          <circle cx="29" cy="24" r="5.300" strokeWidth="4" />
          <circle cx="29" cy="24" r="8" strokeWidth="2.500" strokeDasharray="3.600 2.680" />
        </Icon>
      </div>
      <div className="ml-[23px] mt-[31px] flex h-[60px] w-[60px] shrink-0 items-center justify-center gap-[4px] rounded-full border-2 border-[#8b8990]">
        <span className="h-[4px] w-[4px] rounded-full bg-[#d0d0d0]" />
        <span className="h-[4px] w-[4px] rounded-full bg-[#d0d0d0]" />
        <span className="h-[4px] w-[4px] rounded-full bg-[#d0d0d0]" />
      </div>
    </div>
  );
}

function PageScrollbar() {
  return (
    <div className="flex w-[26px] shrink-0 flex-col bg-[#e9e9e9] text-[#777]">
      <div className="mt-[1px] flex h-[25px] w-[25px] items-center justify-center border border-[#b8b8b8] bg-white">
        <Caret className="h-[6px] w-[11px] rotate-180" />
      </div>
      <div className="h-[884px] w-[25px] border border-[#a8a8a8] bg-white" />
      <div className="mt-[39px] flex h-[25px] w-[25px] items-center justify-center border border-[#b8b8b8] bg-white">
        <Caret className="h-[6px] w-[11px]" />
      </div>
    </div>
  );
}

/* ---------- Main taskbar ---------- */
const APPS = [
  [<Explorer className="h-[26px] w-[32px]" />, true],
  [
    <svg className="h-[33px] w-[30px]" viewBox="0 0 30 33">
      <path d="M0 14.500Q2.500 0 15.500 0 29.500 .5 30 15v4H10.500q.8 7.500 9 7.500 4 0 7.500-2V31q-4 2-10 2Q4.500 32 4.500 20.500 5 14 11 10.500 4.500 9.500 0 14.500zM10.800 13.500h10.700q-.3-5.700-5.300-5.700-4.700 0-5.400 5.700z" fill="#0078d7" />
    </svg>,
    true,
  ],
  [
    <svg className="h-[36px] w-[36px]" viewBox="0 0 36 36">
      <path d="M12 11Q12 1 17 1t6 10M16 11q0-8 5-8 4 0 5 8" fill="none" stroke="#ddd" strokeWidth="1.300" />
      <path d="M0 10h36v24q0 2-2 2H2q-2 0-2-2z" fill="#fff" />
      <path d="M10.500 15.500h7v7h-7z" fill="#f25022" />
      <path d="M18.500 15.500h7v7h-7z" fill="#7fba00" />
      <path d="M10.500 23.500h7v7h-7z" fill="#00a4ef" />
      <path d="M18.500 23.500h7v7h-7z" fill="#ffb900" />
    </svg>,
    false,
  ],
  [
    <svg className="h-[32px] w-[36px]" viewBox="0 0 36 32">
      <path d="M18 0l18 10v21H0V10z" fill="#fff" />
      <path d="M1 10h35l-15 9 5 7L0 10z" fill="#0c0c0c" />
    </svg>,
    false,
  ],
  [<Chrome className="h-[34px] w-[34px]" />, true],
  [
    <svg className="h-[36px] w-[34px]" viewBox="0 0 34 36">
      <path d="M1 3h23l3 29-26 3z" fill="#f4f6f0" stroke="#999" strokeWidth=".6" />
      <path d="M2 20q12-5 24-2l1 14-25 3z" fill="#4fb52c" />
      <path d="M2 3.500h22" stroke="#777" strokeWidth="2" strokeDasharray="1.500 1.500" />
      <path d="M7 24q1-11 8-10 4 5-1 9zM13 14q0-5 4-3 4-1 3 4-4 3-7-1z" fill="#7be13c" stroke="#285c13" strokeWidth="1.200" />
      <path d="M3 21h20M15 28h8" stroke="#284d12" />
      <path d="M33 2L22 26l-1 4 3-3L34 3z" fill="#eea02c" stroke="#9c5b12" strokeWidth=".6" />
      <path d="M32 4l2-4" stroke="#d44" strokeWidth="2" />
    </svg>,
    true,
  ],
  [
    <svg className="h-[28px] w-[28px]" viewBox="0 0 28 28" fill="none" stroke="#fff">
      <circle cx="14" cy="14" r="8" strokeWidth="4" />
      <circle cx="14" cy="14" r="11.700" strokeWidth="4.300" strokeDasharray="4.600 4.589" strokeDashoffset="2.300" />
    </svg>,
    true,
  ],
  [
    <svg className="h-[29px] w-[33px]" viewBox="0 0 33 29">
      <path d="M.7.7h31.600v27.600H.7z" fill="#050505" stroke="#b9c0c6" strokeWidth="1.400" />
      <path d="M1 1h31v3H1z" fill="#cfd4d8" />
      <path d="M1.500 4.500h30q-12 3-15 7T1.500 17z" fill="#333" />
      <text x="3" y="11" fontFamily="Liberation Mono, monospace" fontSize="7" fill="#eee">C:\_</text>
    </svg>,
    true,
  ],
  [
    <svg className="h-[25px] w-[32px]" viewBox="0 0 32 25">
      <path d="M.5.500h31v24H.5z" fill="#f2f2f2" stroke="#aaa" />
      <path d="M.5.500h31v3H.5z" fill="#b8bcc0" />
      <path d="M8 5h12v17H8z" fill="#0078d7" />
      <path d="M2 6h4M2 9h4M2 12h4M2 15h4M22 6h8M22 9h5M22 12h8M22 15h5" stroke="#888" />
    </svg>,
    true,
  ],
  [
    <svg className="h-[36px] w-[36px]" viewBox="0 0 36 36">
      <path d="M4 19Q5 5 19 5q13 1 13 16H14q1 6 6 6 3 0 5-2h7q-4 9-13 9Q4 33 4 19zM14 16h9q-1-4.500-4.500-4.500T14 16z" fill="#45c3f3" stroke="#1b8fd0" strokeWidth=".8" />
      <path d="M9 35Q2 37 1 32 1 22 13 11 26 0 33 1q4 2-1 10" fill="none" stroke="#f6bd1a" strokeWidth="2.600" />
    </svg>,
    true,
  ],
  [<SkypeApp className="ml-[3px] mt-[3px] h-[40px] w-[40px]" />, "active"],
  [<Excel className="h-[32px] w-[32px]" />, "double"],
  [
    <svg className="mb-[1px] h-[32px] w-[34px]" viewBox="0 0 34 33" preserveAspectRatio="none">
      <defs>
        <linearGradient id="pdf" x1="0" y1="0" x2="0" y2="1">
          <stop offset="0" stopColor="#f31212" />
          <stop offset="1" stopColor="#8d0606" />
        </linearGradient>
      </defs>
      <path d="M0 0h34v33H0z" fill="url(#pdf)" />
      <path d="M17 8q-2 0-1 4 2 7 8 10 4 1 3-1-4-3-13 0-7 3-6 5 3 0 6-7 4-9 3-11z" fill="none" stroke="#fff" strokeWidth="1.300" />
    </svg>,
    true,
  ],
  [<Outlook className="h-[32px] w-[33px]" />, "double"],
];

function Taskbar() {
  return (
    <div className="flex h-[60px] shrink-0 items-center bg-[#0c0c0c] text-white">
      <Windows className="ml-[24px] h-[24px] w-[24px]" />
      <div className="ml-[24px] flex h-full w-[516px] shrink-0 items-center border-t border-[#b8b8b8] bg-[#f1f1f1] text-[#2b2b2b]">
        <Icon className="ml-[18px] h-[24px] w-[24px]" box="0 0 24 24" sw={1.600}>
          <circle cx="15.500" cy="8.500" r="7.700" />
          <path d="M10 14L.5 23.500" />
        </Icon>
        <Fit className="ml-[18px] w-[181px] text-[20px] leading-7">Type here to search</Fit>
        <Mic className="ml-[236px] h-[24px] w-[17px]" />
      </div>
      <TaskView className="ml-[24px] h-[24px] w-[24px]" />
      <div className="ml-[28.500px] flex h-full w-[811.500px] shrink-0">
        {APPS.map(([icon, state], i) => (
          <div key={i} className="flex h-full w-[57.950px] shrink-0 flex-col items-center">
            <div
              className={
                "flex h-[57px] w-full items-center justify-center " +
                (state === "active" ? "border-r-[7px] border-[#2d2d2d] bg-[#404040]" : "")
              }
            >
              {icon}
            </div>
            {state && (
              <div
                className={
                  "flex h-[3px] justify-end bg-[#76b9ed] " + (state === "active" ? "w-full" : "w-[44px]")
                }
              >
                {(state === "double" || state === "active") && (
                  <div className={"h-full bg-[#5f93bf] " + (state === "active" ? "w-[7px]" : "w-[13px]")} />
                )}
              </div>
            )}
          </div>
        ))}
      </div>
      <People className="ml-[32px] h-[24px] w-[23px]" />
      <Chevron className="ml-[34px] h-[10px] w-[18px]" />
      <Cloud className="ml-[14px] h-[16px] w-[25px]" />
      <Icon className="ml-[13px] h-[13px] w-[23px]" box="0 0 23 13">
        <path d="M.5.500h20.500v12H.5z" />
        <path d="M2 2h17.500v9H2zM21.500 4H23v5h-1.500z" fill="currentColor" stroke="none" />
      </Icon>
      <Wifi className="ml-[16px] h-[18px] w-[19px]" />
      <Icon className="ml-[13px] h-[20px] w-[24px]" box="0 0 24 20" sw={1.400}>
        <path d="M1 6.500h4L10 1.500v17l-5-5H1zM13 7q2 3 0 6M16 4.500q4 5.500 0 11M19.500 2q6 8 0 16" />
      </Icon>
      <div className="ml-[20px] flex w-[75px] shrink-0 flex-col items-center text-[17px] leading-[28px]">
        <Fit className="w-[65px]">8:54 PM</Fit>
        <Fit className="w-[74px]">6/7/2019</Fit>
      </div>
      <div className="relative ml-[33px] h-[24px] w-[24px] shrink-0">
        <Icon className="h-[24px] w-[24px]" box="0 0 24 24">
          <path d="M0 0h24v18H13l-5 5v-5H0z" fill="currentColor" stroke="none" />
          <path d="M5 5.500h14M5 9.500h14M5 13.500h14" stroke="#111" />
        </Icon>
        <div className="absolute left-[8px] top-[11px] flex h-[25px] w-[30px] items-center justify-center rounded-full border border-[#777] bg-[#2e2e2e]/90 text-[16px] font-semibold">
          <Fit className="w-[19px] leading-[22px]">20</Fit>
        </div>
      </div>
      <div className="ml-[31px] h-full w-[2px] bg-[#555]" />
    </div>
  );
}

export default function App() {
  return (
    <div className="flex h-[1080px] w-[1920px] flex-col overflow-hidden bg-black font-['Open_Sans','Noto_Sans',sans-serif]">
      <TitleBar />
      <div className="flex h-[975px] shrink-0">
        <div className="flex w-[1894px] shrink-0 flex-col">
          <CallHeader />
          <Stage />
          <Controls />
        </div>
        <PageScrollbar />
      </div>
      <Taskbar />
    </div>
  );
}
